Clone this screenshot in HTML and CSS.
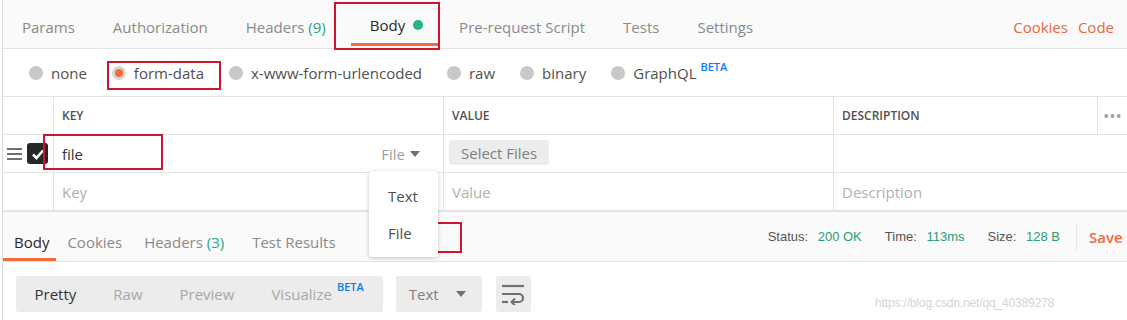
FILE: index.html
```html
<!DOCTYPE html>
<html lang="en">
<head>
    <meta charset="UTF-8">
    <title>Body - form-data</title>
    <link rel="stylesheet" href="styles.css">
</head>
<body>

<div class="page">
    <nav class="req-tabs">
        <a class="tab">Params</a>
        <a class="tab">Authorization</a>
        <a class="tab">Headers <span class="count">(9)</span></a>
        <a class="tab active">Body <span class="dot"></span></a>
        <a class="tab">Pre-request Script</a>
        <a class="tab">Tests</a>
        <a class="tab">Settings</a>
        <div class="tab-links">
            <a>Cookies</a>
            <a>Code</a>
        </div>
        <div class="mark mark-body"></div>
    </nav>

    <div class="body-modes">
        <label class="mode"><span class="radio"></span>none</label>
        <label class="mode"><span class="radio checked"></span>form-data</label>
        <label class="mode"><span class="radio"></span>x-www-form-urlencoded</label>
        <label class="mode"><span class="radio"></span>raw</label>
        <label class="mode"><span class="radio"></span>binary</label>
        <label class="mode"><span class="radio"></span>GraphQL<sup class="beta">BETA</sup></label>
        <div class="mark mark-form"></div>
    </div>

    <div class="kv-table">
        <div class="kv-row kv-head">
            <div class="cell handle"></div>
            <div class="cell">KEY</div>
            <div class="cell">VALUE</div>
            <div class="cell">DESCRIPTION</div>
            <div class="cell more">&bull;&bull;&bull;</div>
        </div>
        <div class="kv-row">
            <div class="cell handle">
                <span class="drag"><i></i><i></i><i></i></span>
                <span class="check">
                    <svg width="14" height="12" viewBox="0 0 14 12"><path d="M2 6.5 L5.5 10 L12 2.5" fill="none" stroke="#fff" stroke-width="2.6"/></svg>
                </span>
            </div>
            <div class="cell key">
                <span>file</span>
                <span class="type">File <span class="caret"></span></span>
            </div>
            <div class="cell value"><button class="select-files">Select Files</button></div>
            <div class="cell"></div>
            <div class="cell last"></div>
        </div>
        <div class="kv-row">
            <div class="cell handle"></div>
            <div class="cell placeholder">Key</div>
            <div class="cell placeholder">Value</div>
            <div class="cell placeholder">Description</div>
            <div class="cell last"></div>
        </div>
        <div class="mark mark-key"></div>
    </div>

    <div class="type-menu">
        <div class="menu-item">Text</div>
        <div class="menu-item">File</div>
    </div>
    <div class="mark mark-file"></div>

    <div class="res-bar">
        <a class="res-tab active">Body</a>
        <a class="res-tab">Cookies</a>
        <a class="res-tab">Headers <span class="count">(3)</span></a>
        <a class="res-tab">Test Results</a>
        <div class="res-meta">
            <span>Status: <b>200 OK</b></span>
            <span>Time: <b>113ms</b></span>
            <span>Size: <b>128 B</b></span>
        </div>
        <a class="save">Save Response</a>
    </div>

    <div class="res-tools">
        <div class="seg">
            <a class="seg-item active">Pretty</a>
            <a class="seg-item">Raw</a>
            <a class="seg-item">Preview</a>
            <a class="seg-item">Visualize<sup class="beta">BETA</sup></a>
        </div>
        <div class="lang">Text <span class="caret"></span></div>
        <div class="wrap-btn">
            <svg width="24" height="22" viewBox="0 0 24 22">
                <path d="M1 3 H23" stroke="#707070" stroke-width="2.2" fill="none"/>
                <path d="M1 11 H18 a4 4 0 0 1 0 8 H12" stroke="#707070" stroke-width="2.2" fill="none"/>
                <path d="M14 15.5 L10.5 19 L14 22.5" stroke="#707070" stroke-width="2" fill="none"/>
                <path d="M1 19 H7" stroke="#707070" stroke-width="2.2" fill="none"/>
            </svg>
        </div>
    </div>

    <div class="watermark">https://blog.csdn.net/qq_40389278</div>
</div>

</body>
</html>
```

FILE: styles.css
```css
body {
    margin: 0;
    font-family: 'Open Sans', 'Noto Sans', Arial, sans-serif;
    color: #505050;
    background: #fff;
}

a {
    cursor: pointer;
}

.page {
    position: relative;
    width: 1125px;
    height: 320px;
    margin-left: 2px;
    border-left: 1px solid #dadada;
    overflow: hidden;
}

/* red annotation boxes */
.mark {
    position: absolute;
    border: 2px solid #d0142c;
    box-sizing: border-box;
    pointer-events: none;
}

.mark-body {
    left: 331px;
    top: 2px;
    width: 106px;
    height: 48px;
}

.mark-form {
    left: 104px;
    top: 12px;
    width: 114px;
    height: 29px;
}

.mark-key {
    left: 40px;
    top: 37px;
    width: 120px;
    height: 36px;
}

.mark-file {
    left: 366px;
    top: 222px;
    width: 93px;
    height: 31px;
}

/* request tabs */
.req-tabs {
    position: relative;
    display: flex;
    align-items: center;
    height: 49px;
    background: #fafafa;
    border-bottom: 1px solid #e4e4e4;
    box-sizing: border-box;
}

.tab {
    display: flex;
    align-items: center;
    height: 100%;
    padding: 5px 19px 0;
    box-sizing: border-box;
    font-size: 15px;
    color: #8a8a8a;
    white-space: pre;
}

.tab:first-child {
    padding-left: 19px;
}

.count {
    color: #26a67a;
}

.tab.active {
    align-self: flex-start;
    height: 46px;
    margin-left: 6px;
    padding: 7px 15px 0 19px;
    color: #282828;
    border-bottom: 3px solid #f26b3a;
}

.dot {
    display: inline-block;
    width: 10px;
    height: 10px;
    margin-left: 4px;
    border-radius: 50%;
    background: #26b47f;
}

.tab.active + .tab {
    padding-left: 21px;
}

.tab-links {
    display: flex;
    gap: 10px;
    margin-left: auto;
    padding: 5px 14px 0 0;
    font-size: 15px;
    color: #e8693f;
}

/* body modes */
.body-modes {
    position: relative;
    display: flex;
    align-items: center;
    gap: 25px;
    height: 48px;
    padding: 1px 0 0 26px;
    border-bottom: 1px solid #e4e4e4;
    box-sizing: border-box;
}

.mode {
    display: flex;
    align-items: center;
    gap: 8px;
    font-size: 15px;
    color: #505050;
}

.radio {
    width: 14px;
    height: 14px;
    border-radius: 50%;
    background: #c8c8c8;
    box-sizing: border-box;
}

.radio.checked {
    background: #f26b3a;
    border: 3px solid #d4d4d4;
}

.beta {
    align-self: flex-start;
    margin: -4px 0 0 -4px;
    font-size: 11px;
    font-weight: 600;
    color: #097bed;
}

/* key / value table */
.kv-table {
    position: relative;
    border-bottom: 1px solid #e4e4e4;
}

.kv-row {
    display: grid;
    grid-template-columns: 51px 390px 390px 264px 1fr;
    height: 38px;
    border-bottom: 1px solid #e4e4e4;
    box-sizing: border-box;
}

.kv-row:last-of-type {
    height: 39px;
    border-bottom: none;
}

.cell {
    display: flex;
    align-items: center;
    padding: 0 8px;
    border-right: 1px solid #e4e4e4;
    font-size: 15px;
    color: #333;
}

.cell.last,
.cell.more {
    border-right: none;
}

.kv-head .cell {
    font-size: 12px;
    font-weight: 600;
    color: #505050;
}

.kv-head .cell.more {
    justify-content: center;
    padding: 0;
    font-size: 14px;
    letter-spacing: 1px;
    color: #a0a0a0;
}

.kv-row:not(.kv-head) .cell:nth-child(4) {
    border-right: none;
}

.cell.handle {
    gap: 5px;
    padding: 0 0 0 4px;
}

.drag {
    display: flex;
    flex-direction: column;
    gap: 3px;
    width: 15px;
}

.drag i {
    display: block;
    height: 2px;
    background: #707070;
}

.check {
    display: flex;
    align-items: center;
    justify-content: center;
    width: 21px;
    height: 21px;
    border-radius: 3px;
    background: #262626;
}

.cell.key {
    justify-content: space-between;
}

.type {
    display: flex;
    align-items: center;
    gap: 5px;
    padding-right: 15px;
    color: #a0a0a0;
}

.caret {
    width: 0;
    height: 0;
    border-left: 5px solid transparent;
    border-right: 5px solid transparent;
    border-top: 6px solid #707070;
}

.cell.value {
    align-items: flex-start;
    padding: 5px 0 0 5px;
}

.select-files {
    height: 25px;
    padding: 0 12px;
    border: none;
    border-radius: 3px;
    background: #ececec;
    font-family: inherit;
    font-size: 15px;
    color: #808080;
}

.placeholder {
    color: #b0b0b0;
}

/* File / Text menu */
.type-menu {
    position: absolute;
    left: 366px;
    top: 171px;
    width: 69px;
    height: 86px;
    padding-top: 12px;
    background: #fff;
    border-radius: 3px;
    box-shadow: 0 1px 4px rgba(0, 0, 0, 0.22);
    box-sizing: border-box;
    z-index: 5;
}

.menu-item {
    height: 37px;
    padding-left: 19px;
    font-size: 15px;
    line-height: 26px;
    color: #505050;
}

/* response bar */
.res-bar {
    display: flex;
    align-items: stretch;
    height: 50px;
    background: #fafafa;
    border-bottom: 1px solid #e4e4e4;
    box-sizing: border-box;
}

.res-tab {
    display: flex;
    align-items: center;
    padding: 10px 11px 0;
    box-sizing: border-box;
    font-size: 15px;
    color: #8a8a8a;
    white-space: pre;
}

.res-tab.active {
    padding: 13px 7px 0 11px;
    color: #282828;
    border-bottom: 3px solid #f26b3a;
}

.res-tab:nth-child(4) {
    padding-left: 17px;
}

.res-meta {
    display: flex;
    align-items: center;
    gap: 23px;
    margin-left: auto;
    padding: 0 16px 0 0;
    font-family: 'Liberation Sans', Arial, sans-serif;
    font-size: 13px;
    color: #555;
}

.res-meta b {
    margin-left: 6px;
    font-weight: normal;
    color: #2b9d74;
}

.save {
    flex: 0 0 52px;
    min-width: 0;
    align-self: center;
    height: 26px;
    padding-left: 12px;
    border-left: 1px solid #e4e4e4;
    box-sizing: border-box;
    font-size: 15px;
    font-weight: 600;
    line-height: 26px;
    color: #f26b3a;
    white-space: nowrap;
}

/* response tools */
.res-tools {
    display: flex;
    gap: 13px;
    padding: 14px 0 0 13px;
}

.seg {
    display: flex;
    align-items: center;
    height: 36px;
    padding-right: 19px;
    border-radius: 3px;
    background: #ececec;
}

.seg-item {
    padding: 0 18.5px;
    font-size: 15px;
    color: #a8a8a8;
}

.seg-item.active {
    color: #333;
}

.seg-item:last-child {
    display: flex;
    padding-right: 0;
}

.seg-item .beta {
    margin: -5px 0 0 5px;
}

.lang {
    display: flex;
    align-items: center;
    gap: 17px;
    width: 86px;
    height: 36px;
    padding-left: 13px;
    border-radius: 3px;
    background: #ececec;
    box-sizing: border-box;
    font-size: 15px;
    color: #808080;
}

.wrap-btn {
    display: flex;
    align-items: center;
    justify-content: center;
    width: 35px;
    height: 36px;
    margin-left: 1px;
    border-radius: 3px;
    background: #ececec;
}

.watermark {
    position: absolute;
    left: 872px;
    top: 296px;
    font-family: 'Liberation Sans', Arial, sans-serif;
    font-size: 12px;
    letter-spacing: -0.15px;
    color: #d4d4d4;
}
```
